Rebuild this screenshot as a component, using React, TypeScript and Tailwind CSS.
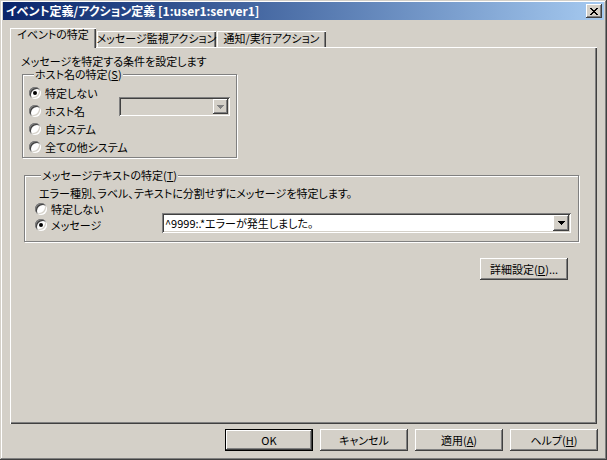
import React from 'react';

const raised =
  'shadow-[inset_-1px_-1px_#404040,inset_1px_1px_#fff,inset_-2px_-2px_#808080,inset_2px_2px_#d4d0c8]';
const sunken =
  'shadow-[inset_1px_1px_#808080,inset_-1px_-1px_#fff,inset_2px_2px_#404040,inset_-2px_-2px_#d4d0c8]';

function Radio({ checked = false, label }: { checked?: boolean; label: string }) {
  return (
    <div className="flex items-center gap-[4px]">
      <span className="flex h-3 w-3 shrink-0 items-center justify-center rounded-full bg-white shadow-[inset_1px_1px_#808080,inset_-1px_-1px_#fff,inset_2px_2px_#404040,inset_-2px_-2px_#d4d0c8]">
        {checked && <span className="h-1 w-1 rounded-full bg-black" />}
      </span>
      <span className="leading-[12px]">{label}</span>
    </div>
  );
}

function Arrow({ disabled = false }: { disabled?: boolean }) {
  return (
    <svg width="7" height="4" viewBox="0 0 7 4" shapeRendering="crispEdges">
      <path d="M0 0h7v1h-7zM1 1h5v1h-5zM2 2h3v1h-3zM3 3h1v1h-1z" fill={disabled ? '#808080' : '#000'} />
    </svg>
  );
}

function Button({ children, isDefault = false, className = '' }: { children: React.ReactNode; isDefault?: boolean; className?: string }) {
  return (
    <div
      className={
        'flex h-[22px] w-[88px] items-center justify-center bg-[#d4d0c8] leading-[12px] whitespace-nowrap ' +
        (isDefault
          ? 'shadow-[inset_0_0_0_1px_#000,inset_-2px_-2px_#404040,inset_2px_2px_#fff,inset_-3px_-3px_#808080] '
          : raised + ' ') +
        className
      }
    >
      {children}
    </div>
  );
}

export default function App() {
  return (
    <div className="flex h-[460px] w-[607px] flex-col bg-[#d4d0c8] px-[3px] pt-[2px] pb-[3px] text-[11px] text-black font-['Noto_Sans_CJK_JP','Liberation_Sans',sans-serif] [font-feature-settings:'palt'] shadow-[inset_-1px_-1px_#404040,inset_1px_1px_#d4d0c8,inset_-2px_-2px_#808080,inset_2px_2px_#fff]">
      {/* title bar */}
      <div className="flex h-[18px] items-center justify-between bg-linear-to-r from-[#0a246a] to-[#a6caf0] pl-[3px] pr-[2px]">
        <span className="text-[12px] font-bold leading-[14px] text-white">イベント定義/アクション定義 [1:user1:server1]</span>
        <div className={'flex h-[14px] w-[16px] items-center justify-center bg-[#d4d0c8] ' + raised}>
          <svg width="8" height="7" viewBox="0 0 8 7" shapeRendering="crispEdges">
            <path d="M0 0h2v1h-2zM6 0h2v1h-2zM1 1h2v1h-2zM5 1h2v1h-2zM2 2h4v1h-4zM3 3h2v1h-2zM2 4h4v1h-4zM1 5h2v1h-2zM5 5h2v1h-2zM0 6h2v1h-2zM6 6h2v1h-2z" fill="#000" />
          </svg>
        </div>
      </div>

      {/* tabs */}
      <div className="mx-[7px] mt-[8px] flex h-[19px] items-end whitespace-nowrap">
        <div className="relative z-10 mb-[-1px] flex h-[20px] w-[86px] justify-center bg-[#d4d0c8] leading-[13px] shadow-[inset_1px_1px_#fff,inset_-1px_0_#404040,inset_-2px_0_#808080]">
          イベントの特定
        </div>
        <div className="ml-[1px] flex h-[16px] w-[119px] justify-center pt-[1px] leading-[13px] shadow-[inset_1px_1px_#fff,inset_-1px_0_#404040,inset_-2px_0_#808080]">
          メッセージ監視アクション
        </div>
        <div className="ml-[1px] flex h-[16px] w-[109px] justify-center pt-[1px] leading-[13px] shadow-[inset_1px_1px_#fff,inset_-1px_0_#404040,inset_-2px_0_#808080]">
          通知/実行アクション
        </div>
      </div>

      {/* panel */}
      <div className="mx-[7px] flex flex-1 flex-col px-[11px] pt-[8px] shadow-[inset_1px_1px_#fff,inset_-1px_-1px_#404040,inset_-2px_-2px_#808080]">
        <div className="leading-[13px]">メッセージを特定する条件を設定します</div>

        <fieldset className="ml-[1px] w-[215px] border border-[#808080] pl-[6px] pr-[6px] pb-[1px] pt-[3px] shadow-[inset_1px_1px_#fff,1px_1px_#fff]">
          <legend className="ml-[5px] bg-[#d4d0c8] px-[1px] leading-[13px]">
            ホスト名の特定(<u>S</u>)
          </legend>
          <div className="flex h-[18px] items-center">
            <Radio checked label="特定しない" />
          </div>
          <div className="flex h-[18px] items-center">
            <Radio label="ホスト名" />
            <div className={'mb-[9px] ml-auto flex h-[19px] w-[111px] items-stretch justify-end bg-[#d4d0c8] p-[2px] ' + sunken}>
              <div className={'flex w-[15px] items-center justify-center bg-[#d4d0c8] ' + raised}>
                <Arrow disabled />
              </div>
            </div>
          </div>
          <div className="flex h-[18px] items-center">
            <Radio label="自システム" />
          </div>
          <div className="flex h-[18px] items-center">
            <Radio label="全ての他システム" />
          </div>
        </fieldset>

        <fieldset className="ml-[3px] mt-[11px] w-[555px] border border-[#808080] pl-[10px] pr-[7px] pb-[8px] pt-[4px] shadow-[inset_1px_1px_#fff,1px_1px_#fff]">
          <legend className="ml-[6px] bg-[#d4d0c8] px-[1px] leading-[12px]">
            メッセージテキストの特定(<u>T</u>)
          </legend>
          <div className="ml-[4px] flex h-[16px] items-center leading-[12px]">
            エラー種別、ラベル、テキストに分割せずにメッセージを特定します。
          </div>
          <div className="flex h-[16px] items-center">
            <Radio label="特定しない" />
          </div>
          <div className="flex h-[16px] items-center">
            <Radio checked label="メッセージ" />
            <div className={'mb-[5px] ml-auto flex h-[20px] w-[409px] items-stretch bg-white p-[2px] ' + sunken}>
              <span className="flex flex-1 items-center pl-[1px] leading-[12px]">^9999:.*エラーが発生しました。</span>
              <div className={'flex w-[16px] items-center justify-center bg-[#d4d0c8] ' + raised}>
                <Arrow />
              </div>
            </div>
          </div>
        </fieldset>

        <Button className="mr-[18px] mt-[16px] self-end">
          詳細設定(<u>D</u>)...
        </Button>
      </div>

      {/* dialog buttons */}
      <div className="mb-[6px] mr-[6px] mt-[5px] flex justify-end gap-[7px]">
        <Button isDefault>OK</Button>
        <Button>キャンセル</Button>
        <Button>
          適用(<u>A</u>)
        </Button>
        <Button>
          ヘルプ(<u>H</u>)
        </Button>
      </div>
    </div>
  );
}
